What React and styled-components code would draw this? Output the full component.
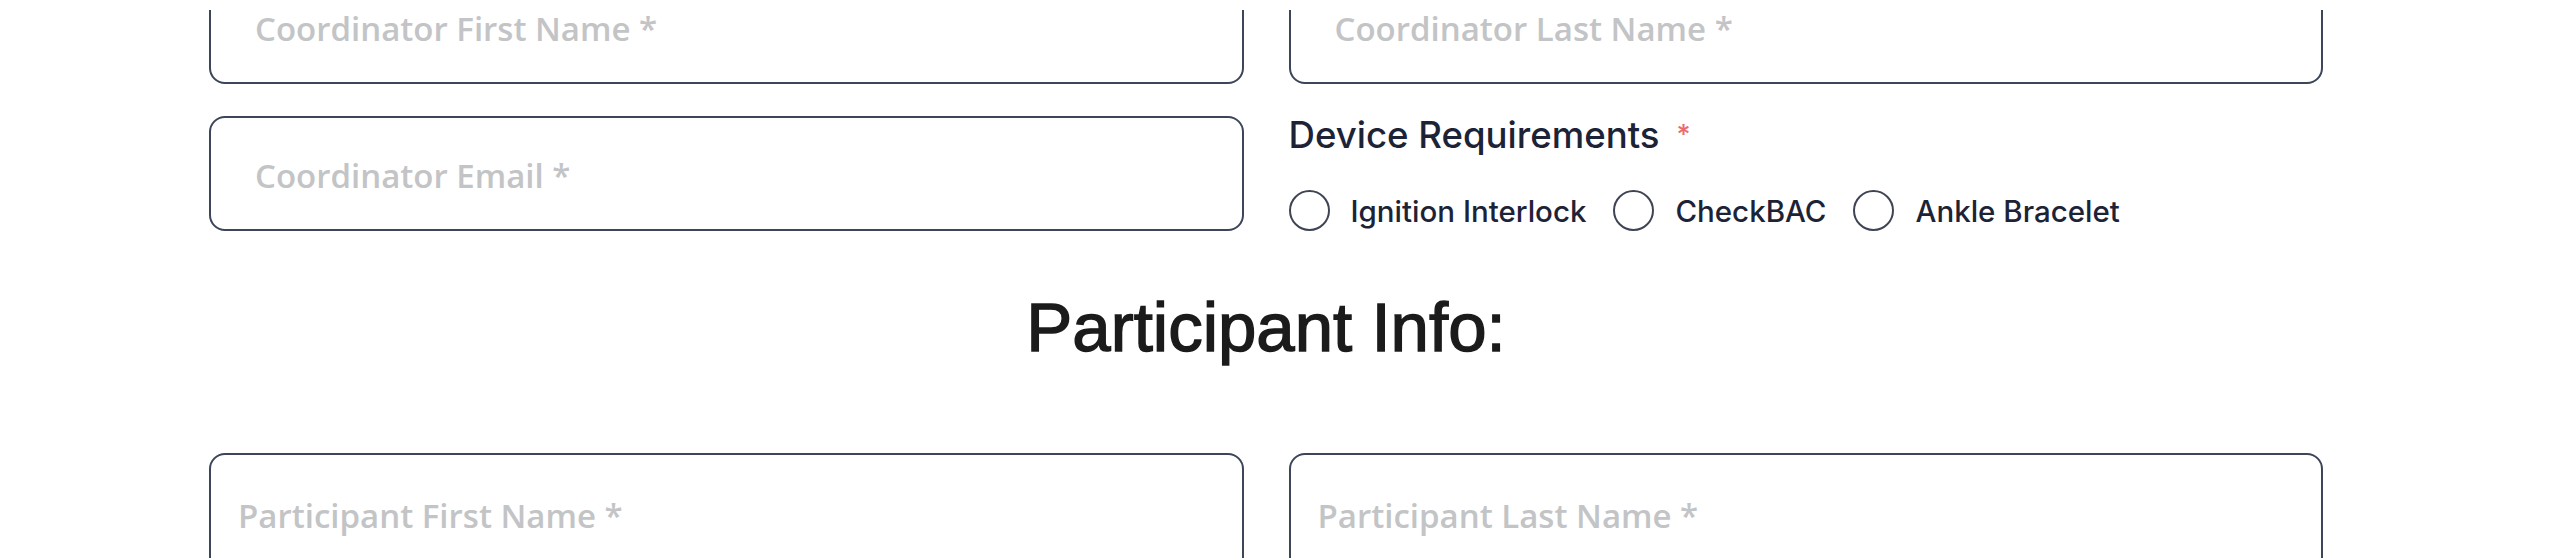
import React from "react";
import styled, { createGlobalStyle } from "styled-components";

const GlobalStyle = createGlobalStyle`
  html, body {
    margin: 0;
    padding: 0;
    background: #ffffff;
  }
  * {
    box-sizing: border-box;
  }
`;

const Viewport = styled.div`
  height: 560px;
  padding: 10px 0 2px;
  background: #ffffff;
`;

const Scroller = styled.div`
  height: 100%;
  overflow: hidden;
`;

const Form = styled.form`
  display: flex;
  flex-direction: column;
  margin-top: -41px;
  padding: 0 237px 0 209px;
`;

const Row = styled.div`
  display: grid;
  grid-template-columns: 1fr 1fr;
  align-items: start;
  column-gap: 45px;
  margin-bottom: ${(p) => p.$gap || 0}px;
`;

const Input = styled.input`
  display: block;
  width: 100%;
  height: ${(p) => p.$height || 115}px;
  padding: ${(p) => (p.$compact ? "4px 0 0 27px" : "4px 0 0 44px")};
  border: 2px solid #3d4559;
  border-radius: 16px;
  background: #ffffff;
  font-family: "Open Sans", "Noto Sans", sans-serif;
  font-size: 33px;
  font-weight: 600;
  color: #333;
  outline: none;

  &::placeholder {
    color: #c3c4c6;
    opacity: 1;
  }
`;

const Group = styled.div`
  display: flex;
  flex-direction: column;
  height: 115px;
`;

const GroupLabel = styled.div`
  margin-top: -3px;
  font-family: "Inter", "Liberation Sans", sans-serif;
  font-size: 36.6px;
  font-weight: 500;
  line-height: 44px;
  color: #1d2337;
`;

const Required = styled.span`
  margin-left: 17px;
  font-size: 27px;
  vertical-align: top;
  color: #ec6a6a;
`;

const Options = styled.div`
  display: flex;
  align-items: center;
  gap: 27px;
  margin-top: 33px;
`;

const Option = styled.label`
  display: flex;
  align-items: center;
  gap: 21px;
  font-family: "Inter", "Liberation Sans", sans-serif;
  font-size: 29.5px;
  font-weight: 500;
  color: #1d2337;
  cursor: pointer;
`;

const Radio = styled.input.attrs({ type: "radio" })`
  appearance: none;
  flex: none;
  margin: 0;
  width: 41px;
  height: 41px;
  border: 2px solid #3f4454;
  border-radius: 50%;
  background: #ffffff;
`;

const Heading = styled.h2`
  margin: 55px 0 83px;
  text-align: center;
  font-family: "Liberation Sans", Arial, sans-serif;
  font-size: 69px;
  font-weight: 400;
  line-height: 84px;
  color: #1b1b1b;
  -webkit-text-stroke: 1.4px #1b1b1b;
`;

const devices = ["Ignition Interlock", "CheckBAC", "Ankle Bracelet"];

export default function App() {
  return (
    <>
      <GlobalStyle />
      <Viewport>
        <Scroller>
          <Form onSubmit={(e) => e.preventDefault()}>
            <Row $gap={32}>
              <Input placeholder="Coordinator First Name *" />
              <Input placeholder="Coordinator Last Name *" />
            </Row>
            <Row>
              <Input type="email" placeholder="Coordinator Email *" />
              <Group>
                <GroupLabel>
                  Device Requirements<Required>*</Required>
                </GroupLabel>
                <Options>
                  {devices.map((d) => (
                    <Option key={d}>
                      <Radio name="device" value={d} />
                      {d}
                    </Option>
                  ))}
                </Options>
              </Group>
            </Row>
            <Heading>Participant Info:</Heading>
            <Row>
              <Input $compact $height={121} placeholder="Participant First Name *" />
              <Input $compact $height={121} placeholder="Participant Last Name *" />
            </Row>
          </Form>
        </Scroller>
      </Viewport>
    </>
  );
}
